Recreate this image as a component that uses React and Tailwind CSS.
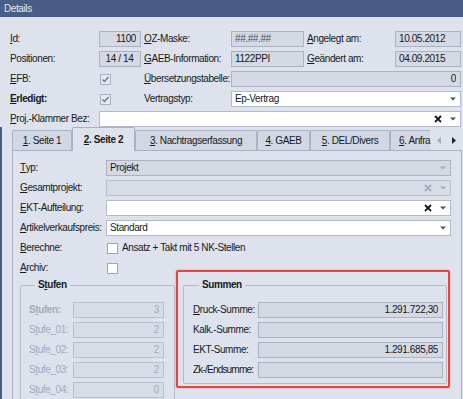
import React from 'react';

const U = ({ children }) => <span className="underline underline-offset-[1px]">{children}</span>;

function Arrow({ off }) {
  return (
    <svg width="6" height="4" viewBox="0 0 6 4" className="shrink-0">
      <path d="M0 0.5 L6 0.5 L3 3.5Z" fill={off ? '#a6aebc' : '#4a5160'} />
    </svg>
  );
}

function Clear({ off }) {
  return (
    <svg width="8" height="8" viewBox="0 0 8 8" className="shrink-0">
      <path d="M1 1 L7 7 M7 1 L1 7" stroke={off ? '#a6aebc' : '#15181e'} strokeWidth="1.8" />
    </svg>
  );
}

function Field({ kind = 'ro', align = 'left', clear, arrow, off, className = '', children }) {
  const look = {
    ro: 'bg-[#d4d9e4] border-[#abb3c3]',
    edit: 'bg-white border-[#b3bbcb]',
    dis: 'bg-[#d7dce7] border-[#b8bfcd]',
  }[kind];
  return (
    <div className={`h-[16px] border ${look} flex items-center pl-[3px] pr-[4px] gap-[8px] ${className}`}>
      <div className={`flex-1 truncate ${align === 'right' ? 'text-right' : align === 'center' ? 'text-center' : ''}`}>{children}</div>
      {clear && <Clear off={off} />}
      {arrow && <Arrow off={off} />}
    </div>
  );
}

function Check({ checked }) {
  return (
    <div className="h-[16px] flex items-center pl-[1px]">
      <div className={`w-[11px] h-[11px] border flex items-center justify-center ${checked ? 'bg-[#e4e8ef] border-[#a9b1c0]' : 'bg-white border-[#9ea6b5]'}`}>
        {checked && (
          <svg width="9" height="9" viewBox="0 0 9 9">
            <path d="M1.5 4.5 L3.5 6.5 L7.5 2" stroke="#6e7686" strokeWidth="1.3" fill="none" />
          </svg>
        )}
      </div>
    </div>
  );
}

const Label = ({ className = '', children }) => (
  <div className={`h-[16px] flex items-center whitespace-nowrap ${className}`}>{children}</div>
);

function Tab({ active, w, children }) {
  if (active) {
    return (
      <div className={`${w} h-[24px] -mb-px z-10 border border-b-0 border-[#a8b1c2] bg-[#dde2ec] rounded-t-[2px] flex items-center justify-center font-bold shrink-0`}>
        {children}
      </div>
    );
  }
  return (
    <div className={`${w} h-[20px] border border-b-0 border-[#aab3c3] bg-[#d1d7e3] rounded-t-[2px] flex items-center justify-center shrink-0 whitespace-nowrap`}>
      {children}
    </div>
  );
}

export default function App() {
  return (
    <div className="w-[463px] h-[399px] overflow-hidden bg-[#dde2ec] text-[#161a22] text-[10px] tracking-[-0.4px] leading-none font-['Liberation_Sans',Arial,sans-serif]">
      <div className="h-[17px] bg-[#485e86] text-[#e2e8f1] pl-[4px] flex items-center">Details</div>

      <div className="pt-[14px] pl-[10px] grid grid-cols-[89px_42px_90px_73px_91px_66px] auto-rows-[16px] gap-y-[4px]">
        <Label><U>I</U>d:</Label>
        <Field align="right">1100</Field>
        <Label className="pl-[3px]"><U>O</U>Z-Maske:</Label>
        <Field className="text-[#4a505b]">##.##.##</Field>
        <Label className="pl-[3px]"><U>A</U>ngelegt am:</Label>
        <Field>10.05.2012</Field>

        <Label>Positionen:</Label>
        <Field align="center">14 / 14</Field>
        <Label className="pl-[3px]"><U>G</U>AEB-Information:</Label>
        <Field>1122PPI</Field>
        <Label className="pl-[3px]"><U>G</U>eändert am:</Label>
        <Field>04.09.2015</Field>

        <Label><U>E</U>FB:</Label>
        <Check checked />
        <Label className="pl-[3px]"><U>Ü</U>bersetzungstabelle:</Label>
        <Field align="right" className="col-span-3">0</Field>

        <Label className="font-bold"><U>E</U>rledigt:</Label>
        <Check checked />
        <Label className="pl-[3px]">Vertragstyp:</Label>
        <Field kind="edit" arrow className="col-span-3">Ep-Vertrag</Field>

        <Label><U>P</U>roj.-Klammer Bez:</Label>
        <Field kind="edit" clear arrow className="col-span-5" />
      </div>

      <div className="border-l-2 border-[#4a5e84] h-[272px]">
        <div className="flex items-end h-[23px] pl-[10px]">
          <div className="w-[418px] flex items-end">
            <Tab w="w-[60px]"><U>1</U>. Seite 1</Tab>
            <Tab active w="w-[63px]"><U>2</U>. Seite 2</Tab>
            <Tab w="w-[122px]"><U>3</U>. Nachtragserfassung</Tab>
            <Tab w="w-[53px]"><U>4</U>. GAEB</Tab>
            <Tab w="w-[80px]"><U>5</U>. DEL/Divers</Tab>
            <Tab w="w-[40px] justify-start pl-[8px] border-r-0 rounded-tr-none"><U>6</U>. Anfra</Tab>
          </div>
          <div className="flex items-center gap-[11px] pl-[7px] h-[20px]">
            <svg width="4" height="7" viewBox="0 0 4 7"><path d="M4 0 L0 3.5 L4 7Z" fill="#a3abb9" /></svg>
            <svg width="4" height="7" viewBox="0 0 4 7"><path d="M0 0 L4 3.5 L0 7Z" fill="#1d222b" /></svg>
          </div>
        </div>

        <div className="relative ml-[10px] w-[450px] h-[260px] border border-[#a8b1c2] pt-[9px] pl-[7px] pr-[10px]">
          <div className="grid grid-cols-[86px_1fr] auto-rows-[16px] gap-y-[4px]">
            <Label><U>T</U>yp:</Label>
            <Field kind="ro" arrow off>Projekt</Field>
            <Label><U>G</U>esamtprojekt:</Label>
            <Field kind="dis" clear arrow off />
            <Label><U>E</U>KT-Aufteilung:</Label>
            <Field kind="edit" clear arrow />
            <Label><U>A</U>rtikelverkaufspreis:</Label>
            <Field kind="edit" arrow>Standard</Field>
            <Label><U>B</U>erechne:</Label>
            <div className="flex items-center gap-[4px]">
              <Check />
              <span>Ansatz + Takt mit 5 NK-Stellen</span>
            </div>
            <Label><U>A</U>rchiv:</Label>
            <Check />
          </div>

          <div className="mt-[3px] grid grid-cols-[155px_264px] gap-x-[8px] items-start">
            <fieldset className="border border-[#b3bbc9] rounded-[2px] pt-[11px] pl-[8px] pr-[9px] pb-[8px]">
              <legend className="ml-[6px] px-[3px] font-bold leading-[12px]">S<U>t</U>ufen</legend>
              <div className="grid grid-cols-[44px_91px] auto-rows-[16px] gap-y-[4px] text-[#a2aab9]">
                <Label className="font-bold">S<U>t</U>ufen:</Label>
                <Field kind="dis" align="right">3</Field>
                <Label>S<U>t</U>ufe_01:</Label>
                <Field kind="dis" align="right">2</Field>
                <Label>S<U>t</U>ufe_02:</Label>
                <Field kind="dis" align="right">2</Field>
                <Label>S<U>t</U>ufe_03:</Label>
                <Field kind="dis" align="right">2</Field>
                <Label>S<U>t</U>ufe_04:</Label>
                <Field kind="dis" align="right">0</Field>
              </div>
            </fieldset>

            <fieldset className="border border-[#b3bbc9] rounded-[2px] pt-[11px] pl-[9px] pr-[3px] pb-[5px]">
              <legend className="ml-[6px] px-[3px] font-bold leading-[12px]">Summen</legend>
              <div className="grid grid-cols-[65px_185px] auto-rows-[16px] gap-y-[4px]">
                <Label><U>D</U>ruck-Summe:</Label>
                <Field align="right">1.291.722,30</Field>
                <Label>Kalk.-Summe:</Label>
                <Field />
                <Label>EKT-Summe:</Label>
                <Field align="right">1.291.685,85</Field>
                <Label className="tracking-[-0.8px]">Zk-/Endsumme:</Label>
                <Field />
              </div>
            </fieldset>
          </div>

          <div className="absolute left-[163px] top-[119px] w-[274px] h-[118px] border-2 border-[#e5453d] rounded-[2px] shadow-[0_0_2px_rgba(229,69,61,0.5)] pointer-events-none" />
        </div>
      </div>
    </div>
  );
}
